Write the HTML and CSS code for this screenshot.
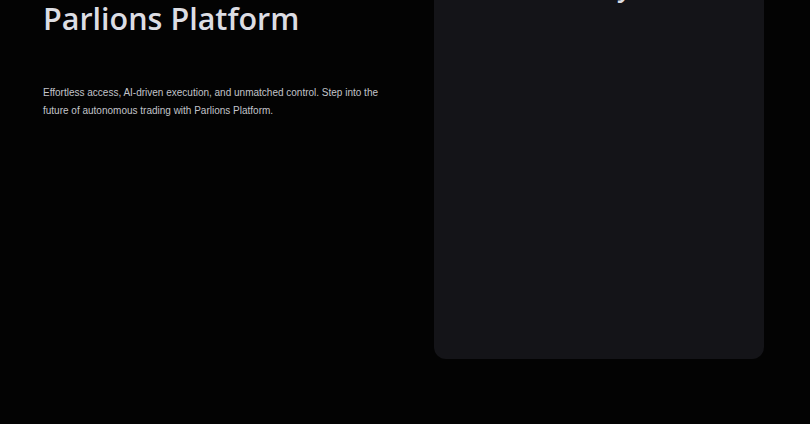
FILE: index.html
```html
<!DOCTYPE html>
<html lang="en">
<head>
    <meta charset="UTF-8">
    <meta name="viewport" content="width=device-width, initial-scale=1.0">
    <title>Parlions Platform</title>
    <link rel="stylesheet" href="styles.css">
</head>
<body>
    <section class="hero">
        <div class="hero-text">
            <h1 class="hero-title">Parlions Platform</h1>
            <p class="hero-desc">Effortless access, AI-driven execution, and unmatched control. Step into the future of autonomous trading with Parlions Platform.</p>
        </div>
        <div class="hero-card">
            <h2 class="card-title">Play</h2>
        </div>
    </section>
</body>
</html>
```

FILE: styles.css
```css
html, body {
    margin: 0;
    padding: 0;
    background: #030303;
    height: 100%;
    overflow: hidden;
}
body {
    font-family: "Liberation Sans", Arial, sans-serif;
    color: #dcdde3;
}
.hero {
    width: 721px;
    margin: -60px 0 0 43px;
    display: flex;
    justify-content: space-between;
    align-items: flex-start;
}
.hero-text {
    width: 350px;
    padding-top: 56px;
}
.hero-title {
    font-family: "Open Sans", sans-serif;
    font-weight: 600;
    font-size: 30.5px;
    line-height: 44px;
    margin: 0;
    color: #dcdde3;
}
.hero-desc {
    font-size: 10px;
    line-height: 18px;
    color: #c2c3ca;
    margin: 44px 0 0;
}
.hero-card {
    width: 330px;
    height: 419px;
    background: #141418;
    border-radius: 12px;
    box-sizing: border-box;
    padding-top: 29px;
    text-align: center;
}
.card-title {
    margin: 0;
    padding-left: 12px;
    font-family: "Open Sans", sans-serif;
    font-size: 26px;
    font-weight: 600;
    line-height: 36px;
    color: #dcdde3;
}
```
